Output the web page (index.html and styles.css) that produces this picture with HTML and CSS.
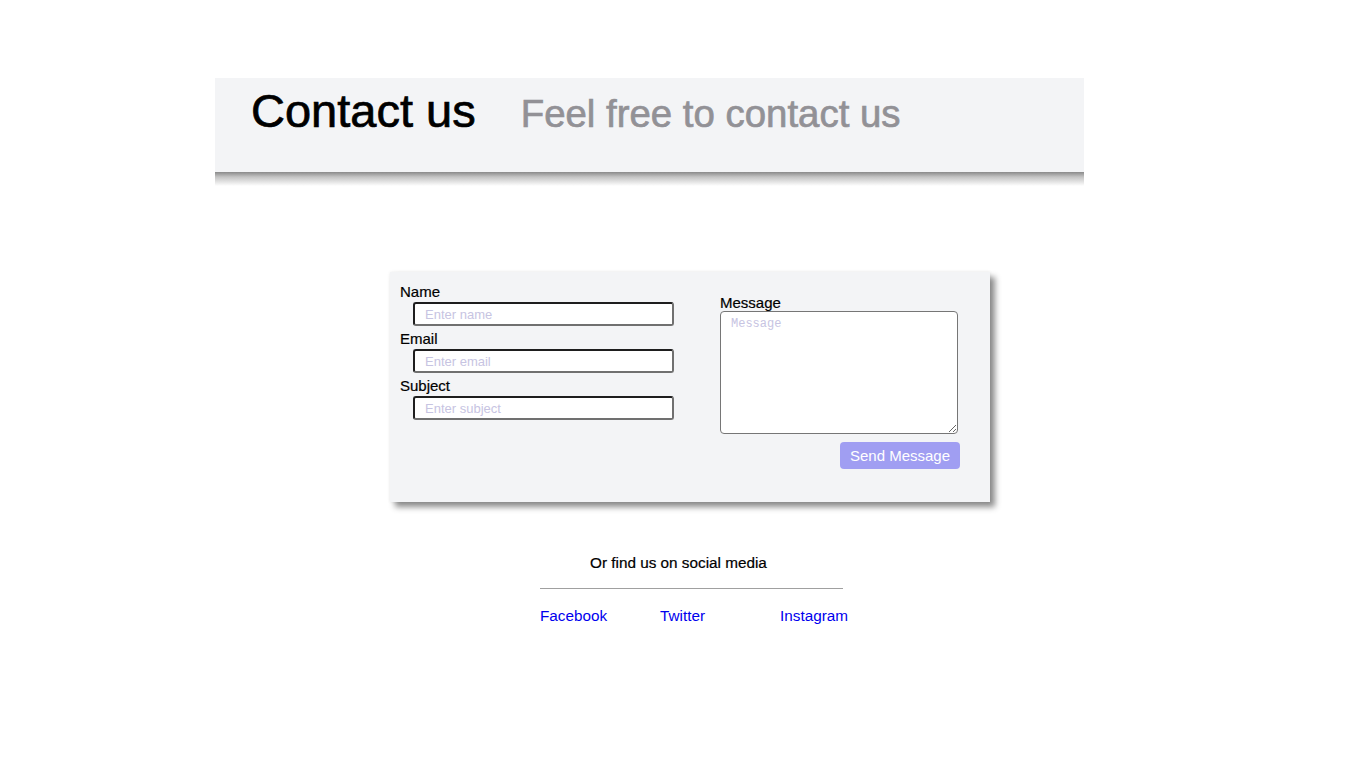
FILE: index.html
```html
<!DOCTYPE html>
<html>
<head>
<meta charset="utf-8">
<link rel="stylesheet" href="styles.css">
</head>
<body>
<header class="banner">
  <h1 class="title">Contact us</h1>
  <h2 class="subtitle">Feel free to contact us</h2>
</header>
<main class="card">
  <div class="col-left">
    <label class="lbl">Name</label>
    <input class="field" type="text" placeholder="Enter name">
    <label class="lbl">Email</label>
    <input class="field" type="text" placeholder="Enter email">
    <label class="lbl">Subject</label>
    <input class="field" type="text" placeholder="Enter subject">
  </div>
  <div class="col-right">
    <label class="lbl">Message</label>
    <textarea class="msg" placeholder="Message"></textarea>
    <div class="actions"><button class="send">Send Message</button></div>
  </div>
</main>
<footer class="social">
  <p class="social-title">Or find us on social media</p>
  <hr class="rule">
  <div class="links">
    <a class="link" href="#">Facebook</a>
    <a class="link" href="#">Twitter</a>
    <a class="link" href="#">Instagram</a>
  </div>
</footer>
</body>
</html>
```
FILE: styles.css
```css
html, body { margin: 0; padding: 0; background: #fff; }
body { font-family: "Liberation Sans", Arial, sans-serif; color: #000; font-size: 15px; }

.banner {
  margin: 78px 0 0 215px;
  width: 869px;
  height: 108px;
  background: linear-gradient(to bottom, #f3f4f6 0, #f3f4f6 94px, #8a8a8a 94px, #c4c4c4 99px, #fff 108px);
  display: flex;
  align-items: baseline;
  padding-left: 36px;
  box-sizing: border-box;
}
.title {
  margin: 0;
  font-size: 47px;
  font-weight: normal;
  line-height: 66px;
  -webkit-text-stroke: 0.7px #000;
}
.subtitle {
  margin: 0 0 0 45px;
  font-size: 38.4px;
  font-weight: normal;
  color: #929196;
  -webkit-text-stroke: 0.7px #929196;
}

.card {
  margin: 86px 0 0 390px;
  width: 600px;
  height: 230px;
  box-sizing: border-box;
  background: #f3f4f6;
  box-shadow: 5px 5px 6px rgba(0,0,0,0.45), 0 0 3px rgba(0,0,0,0.08);
  display: flex;
  padding: 11px 10px;
}
.col-left {
  width: 320px;
  display: flex;
  flex-direction: column;
  align-items: flex-start;
}
.lbl { display: block; line-height: 17px; font-size: 15px; -webkit-text-stroke: 0.2px #000; }
.col-left .lbl { margin-bottom: 2px; }
.field {
  margin: 0 0 4px 13px;
  width: 261px;
  height: 24px;
  box-sizing: border-box;
  border: 2px solid;
  border-color: #1e1e1e #707070 #707070 #1e1e1e;
  border-radius: 3px;
  padding: 0 10px;
  font-family: "Liberation Sans", Arial, sans-serif;
  font-size: 13px;
  background: #fff;
  outline: none;
}
.field::placeholder, .msg::placeholder { color: #c7c4e2; }

.col-right {
  width: 240px;
  padding-top: 11px;
  display: flex;
  flex-direction: column;
}
.msg {
  width: 238px;
  height: 123px;
  box-sizing: border-box;
  border: 1px solid #767676;
  border-radius: 4px;
  padding: 5px 10px;
  font-family: "Liberation Mono", monospace;
  font-size: 12px;
  background: #fff;
  margin: 0;
  display: block;
}
.actions { display: flex; justify-content: flex-end; margin-top: 8px; }
.send {
  width: 120px;
  height: 27px;
  border: none;
  border-radius: 4px;
  background: #a09ef2;
  color: #fff;
  font-family: "Liberation Sans", Arial, sans-serif;
  font-size: 15px;
  padding: 0;
}

.social { margin: 0 0 0 540px; width: 320px; }
.social-title { margin: 52px 0 0 50px; line-height: 17px; font-size: 15.3px; -webkit-text-stroke: 0.2px #000; }
.rule { margin: 17px 0 0 0; width: 303px; border: none; border-top: 1px solid #a0a0a0; height: 0; }
.links { display: flex; margin-top: 18px; }
.link { width: 120px; color: #0000ee; text-decoration: none; line-height: 17px; flex: none; font-size: 15.3px; }
```
